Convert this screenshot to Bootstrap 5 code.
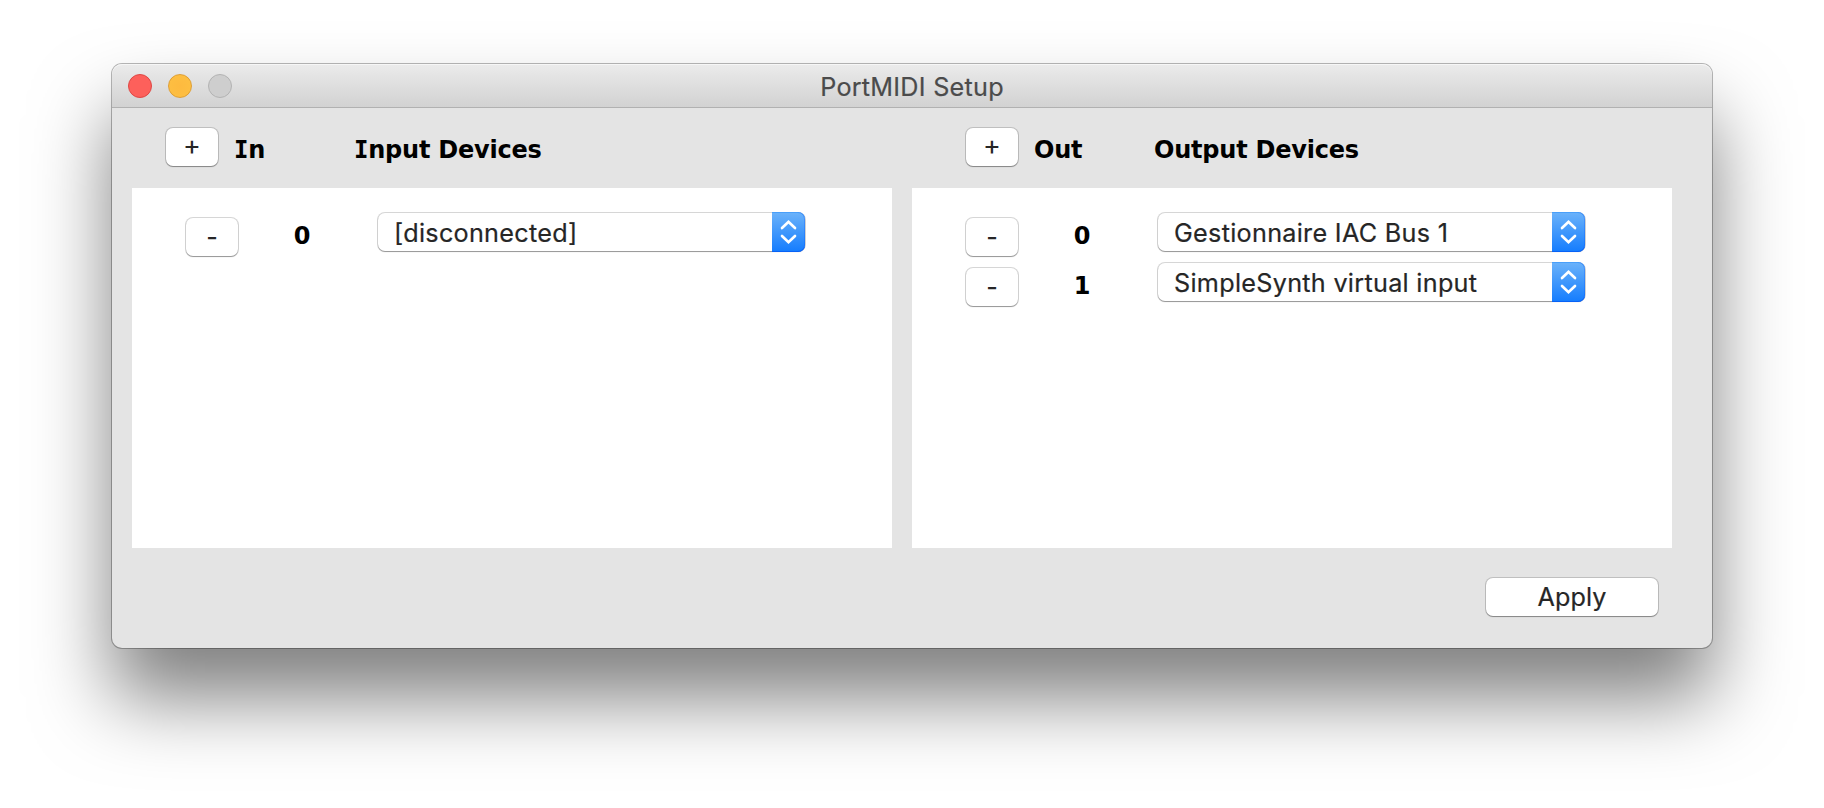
<!DOCTYPE html>
<html lang="en">
<head>
<meta charset="utf-8">
<meta name="viewport" content="width=device-width, initial-scale=1">
<title>PortMIDI Setup</title>
<link href="https://cdn.jsdelivr.net/npm/bootstrap@5.3.0/dist/css/bootstrap.min.css" rel="stylesheet">
<style>
body { background: #fff; font-family: Inter, "Liberation Sans", sans-serif; color: #262626; overflow: hidden; height: 808px; padding: 64px 112px 0; }
.app-window { width: 1600px; height: 584px; border-radius: 10px; background: #e4e4e4;
  box-shadow: 0 0 0 1px rgba(0,0,0,.28), 0 50px 78px rgba(0,0,0,.5); }
.title-bar { height: 44px; border-radius: 10px 10px 0 0; border-bottom: 1px solid #b1b1b1; background: linear-gradient(#ebebeb, #d2d2d2); box-shadow: inset 0 1px 0 #f6f6f6; padding: 0 16px; }
.lights { width: 300px; gap: 16px; }
.light { width: 24px; height: 24px; border-radius: 50%; border: 1px solid; }
.light-close { background: #fd605b; border-color: #de4845; }
.light-min { background: radial-gradient(#fdba3f, #fdc042); border-color: #de9f35; }
.light-off { background: #cecece; border-color: #b3b3b3; }
.win-title { font-size: 25.2px; line-height: 40px; padding-top: 3px; letter-spacing: .25px; color: #4b4b4b; -webkit-text-stroke: .2px #4b4b4b; }
.pane { width: 760px; }
.pane-head { height: 80px; padding-top: 20px; }
.pane-in .pane-head { padding-left: 34px; }
.pane-out .pane-head, .dev-row { padding-left: 54px; }
.pane-list { height: 360px; background: #fff; padding-top: 25px; }
.mac-btn { border: 0; border-radius: 7px; background: #fff; width: 52px; height: 38px; padding: 0; color: #262626;
  box-shadow: 0 0 0 1px rgba(0,0,0,.16), 0 1px 1px 0 rgba(0,0,0,.3); }
.sym-plus { font-size: 27px; line-height: 36px; padding-bottom: 2px; }
.sym-minus { font-size: 25px; font-weight: 500; line-height: 38px; margin-top: 5px; }
.verd { font-family: "DejaVu Sans", sans-serif; font-weight: 700; font-size: 24px; line-height: 38px; padding-top: 3px; letter-spacing: -.22px; color: #000; white-space: nowrap; }
.verd i { font-family: "DejaVu Sans Mono", monospace; font-style: normal; }
.col-tag { width: 120px; margin-left: 16px; }
.dev-row { height: 50px; }
.mac-select { width: 427px; height: 38px; margin-left: 66px; padding-left: 16px; background: #fff; border-radius: 7px; font-size: 25.2px; line-height: 38px; letter-spacing: .29px; white-space: nowrap; -webkit-text-stroke: .2px #262626;
  box-shadow: 0 0 0 1px rgba(0,0,0,.16), 0 1px 1px 0 rgba(0,0,0,.3); }
.mac-select span { padding-top: 1px; }
.mac-select svg { width: 33px; height: 40px; margin-top: -1px; flex: none; border-radius: 0 7px 7px 0; background: linear-gradient(#6cb3fa, #147cfe); box-shadow: inset -1px 0 0 rgba(0,90,255,.3), inset 0 -1px 0 rgba(0,80,240,.6), inset 0 1px 0 rgba(40,140,250,.5); }
.num { width: 20px; margin-left: 54px; padding-top: 4px; text-align: center; letter-spacing: 0; }
.panes { gap: 20px; padding-left: 20px; }
.foot { padding: 30px 54px 0 0; }
.apply { width: 172px; font-size: 25.2px; line-height: 38px; letter-spacing: .1px; -webkit-text-stroke: .2px #262626; }
</style>
</head>
<body>
<svg class="d-none"><symbol id="chev" viewBox="0 0 33 40"><path d="M10 16l6.5-6.2L23 16M10 24l6.5 6.2L23 24" fill="none" stroke="#fff" stroke-width="2.7" stroke-linecap="round"/></symbol></svg>
<main class="app-window d-flex flex-column">
  <header class="title-bar d-flex align-items-center justify-content-between">
    <div class="lights d-flex"><span class="light light-close"></span><span class="light light-min"></span><span class="light light-off"></span></div>
    <div class="win-title">PortMIDI Setup</div>
    <div class="lights"></div>
  </header>
  <div class="panes d-flex">
    <section class="pane pane-in">
      <div class="pane-head d-flex">
        <button class="mac-btn sym-plus">+</button>
        <span class="verd col-tag"><i>I</i>n</span>
        <span class="verd"><i>I</i>nput Devices</span>
      </div>
      <div class="pane-list">
        <div class="dev-row d-flex">
          <button class="mac-btn sym-minus">-</button>
          <span class="verd num">0</span>
          <div class="mac-select d-flex justify-content-between"><span>[disconnected]</span><svg><use href="#chev"/></svg></div>
        </div>
      </div>
    </section>
    <section class="pane pane-out">
      <div class="pane-head d-flex">
        <button class="mac-btn sym-plus">+</button>
        <span class="verd col-tag">Out</span>
        <span class="verd">Output Devices</span>
      </div>
      <div class="pane-list">
        <div class="dev-row d-flex">
          <button class="mac-btn sym-minus">-</button>
          <span class="verd num">0</span>
          <div class="mac-select d-flex justify-content-between"><span>Gestionnaire IAC Bus 1</span><svg><use href="#chev"/></svg></div>
        </div>
        <div class="dev-row d-flex">
          <button class="mac-btn sym-minus">-</button>
          <span class="verd num">1</span>
          <div class="mac-select d-flex justify-content-between"><span>SimpleSynth virtual input</span><svg><use href="#chev"/></svg></div>
        </div>
      </div>
    </section>
  </div>
  <footer class="foot d-flex justify-content-end"><button class="mac-btn apply">Apply</button></footer>
</main>
<script src="https://cdn.jsdelivr.net/npm/bootstrap@5.3.0/dist/js/bootstrap.bundle.min.js"></script>
</body>
</html>
